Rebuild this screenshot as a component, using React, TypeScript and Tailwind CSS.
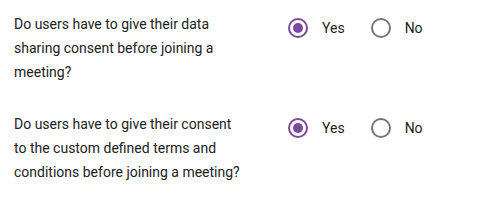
import React from "react";

function Radio({ checked, label }: { checked: boolean; label: string }) {
  return (
    <label className="flex items-center gap-[14px]">
      <span
        className={
          "flex h-[20px] w-[20px] items-center justify-center rounded-full border-2 " +
          (checked ? "border-[#7b4a9c]" : "border-[#767676]")
        }
      >
        {checked && <span className="h-[10px] w-[10px] rounded-full bg-[#7b4a9c]" />}
      </span>
      <span className="text-[14px] text-[#212121]">{label}</span>
    </label>
  );
}

function Question({ text }: { text: string }) {
  return (
    <div className="flex items-start">
      <p className="w-[230px] text-[14px] leading-[24px] text-[#212121]">{text}</p>
      <div className="ml-[44px] flex h-[32px] items-center gap-[26px]">
        <Radio checked label="Yes" />
        <Radio checked={false} label="No" />
      </div>
    </div>
  );
}

export default function App() {
  return (
    <div
      className="flex h-[203px] w-[481px] flex-col gap-[28px] bg-white pl-[14px] pt-[12px]"
      style={{ fontFamily: "Roboto, 'Liberation Sans', sans-serif" }}
    >
      <Question text="Do users have to give their data sharing consent before joining a meeting?" />
      <Question text="Do users have to give their consent to the custom defined terms and conditions before joining a meeting?" />
    </div>
  );
}
